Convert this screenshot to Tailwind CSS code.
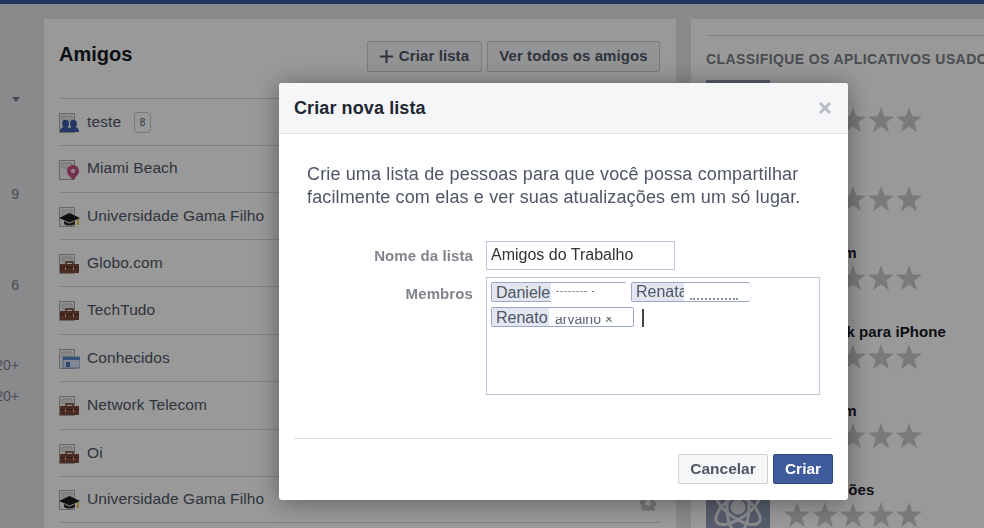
<!DOCTYPE html>
<html lang="pt-BR">
<head>
    <meta charset="UTF-8">
    <meta name="viewport" content="width=device-width, initial-scale=1.0">
    <title>Amigos</title>
    <script src="https://cdn.jsdelivr.net/npm/@tailwindcss/browser@4"></script>
</head>
<body class="bg-[#e5e6ea] font-['Liberation_Sans',Arial,sans-serif] overflow-hidden">
    <svg class="hidden">
        <defs>
            <symbol id="star" viewBox="0 0 24 24"><path fill="currentColor" d="M12 0l3 8.6 9 .3-7.1 5.5 2.5 8.9L12 18.1 4.6 23.300l2.500-8.900L0 8.900l9-.3z"/></symbol>
            <symbol id="doc" viewBox="0 0 21 20"><path d="M.5.5h15v19H.500z" fill="#f4f4f4" stroke="#a9a9a9"/><path d="M3 3h10v5H3z" fill="#e3e3e3" stroke="#c4c4c4"/></symbol>
            <symbol id="bag" viewBox="0 0 21 20"><path d="M7 10V8h7v2" fill="none" stroke="#6d4336" stroke-width="1.500"/><path d="M1 10h19v9H1z" fill="#7c4a3a"/><path d="M1 13h19v1H1z" fill="#4f2c22"/><path d="M6 13h1v3H6zM14 13h1v3h-1z" fill="#e2c7a8"/></symbol>
            <symbol id="cap" viewBox="0 0 21 20"><path d="M10.500 6L21 11l-10.500 4.500L0 11z" fill="#1a1a1a"/><path d="M5 14v3c3 2 8 2 11 0v-3l-5.500 2.500z" fill="#2a2a2a"/><path d="M18 12v6h2v-6z" fill="#e5c84d"/></symbol>
        </defs>
    </svg>

    <div class="h-[4px] bg-[#3b5998]"></div>
    <div class="flex h-[524px]">
        <!-- left rail -->
        <div class="w-[44px] shrink-0 flex flex-col items-end pr-[25px] text-[14px] leading-[16px] text-[#7b7f86]">
            <div class="mt-[93px] mr-[-1px] w-0 h-0 border-x-[4px] border-x-transparent border-t-[5px] border-t-[#7b7f86]"></div>
            <span class="mt-[84px]">9</span>
            <span class="mt-[75px]">6</span>
            <span class="mt-[64px] whitespace-nowrap">20+</span>
            <span class="mt-[15px] whitespace-nowrap">20+</span>
        </div>

        <!-- friends panel -->
        <div class="w-[632px] shrink-0 mt-[15px] mr-[15px] bg-white px-[15px]">
            <div class="flex items-start justify-between h-[79px] pr-[1px]">
                <h1 class="mt-[21px] text-[20px] leading-[28px] font-bold text-[#141823]">Amigos</h1>
                <div class="flex gap-[5px] mt-[22px] text-[15px] font-bold text-[#4e5665] tracking-[0.1px]">
                    <button class="w-[115px] h-[31px] flex items-center justify-center gap-[6px] bg-[#f6f7f8] border border-[#cdced0] rounded-[2px]">
                        <svg width="13" height="13" viewBox="0 0 13 13"><path d="M5.500 0h2v5.500H13v2H7.500V13h-2V7.500H0v-2h5.500z" fill="#4e5665"/></svg>
                        Criar lista
                    </button>
                    <button class="w-[173px] h-[31px] bg-[#f6f7f8] border border-[#cdced0] rounded-[2px]">Ver todos os amigos</button>
                </div>
            </div>
            <ul class="border-t border-[#d8d8d8] text-[15.5px] text-[#4e5665] tracking-[0.1px]">
                <li class="h-[47px] border-b border-[#d8d8d8] flex items-center gap-[7px]">
                    <svg class="w-[21px] h-[20px] mt-[1px]" viewBox="0 0 21 20"><use href="#doc"/><path d="M1 19c0-3 1-4 3.500-5a3.500 4 0 1 1 4 0c1 .4 1.500.8 2 1.500.5-.7 1-1.100 2-1.500a3.500 4 0 1 1 4 0c2.500 1 3.500 2 3.500 5z" fill="#3b5ba8"/></svg>
                    <span class="mt-[-1px]">teste</span>
                    <span class="ml-[6px] mt-[1px] w-[17px] h-[21px] flex items-center justify-center border border-[#c8c8c8] rounded-[4px] text-[10px] tracking-normal">8</span>
                </li>
                <li class="h-[47px] border-b border-[#d8d8d8] flex items-center gap-[7px]">
                    <svg class="w-[21px] h-[20px] mt-[1px]" viewBox="0 0 21 20"><use href="#doc"/><path d="M14 5a6 6 0 0 1 6 6c0 4-4 6-6 9-2-3-6-5-6-9a6 6 0 0 1 6-6z" fill="#c2517f"/><circle cx="14" cy="11" r="2.200" fill="#f6d8e4"/></svg>
                    <span class="mt-[-2px]">Miami Beach</span>
                </li>
                <li class="h-[47px] border-b border-[#d8d8d8] flex items-center gap-[7px]">
                    <svg class="w-[21px] h-[20px] mt-[1px]" viewBox="0 0 21 20"><use href="#doc"/><use href="#cap"/></svg>
                    <span class="mt-[-1px]">Universidade Gama Filho</span>
                </li>
                <li class="h-[47px] border-b border-[#d8d8d8] flex items-center gap-[7px]">
                    <svg class="w-[21px] h-[20px] mt-[1px]" viewBox="0 0 21 20"><use href="#doc"/><use href="#bag"/></svg>
                    <span class="mt-[-1px]">Globo.com</span>
                </li>
                <li class="h-[48px] border-b border-[#d8d8d8] flex items-center gap-[7px]">
                    <svg class="w-[21px] h-[20px] mt-[1px]" viewBox="0 0 21 20"><use href="#doc"/><use href="#bag"/></svg>
                    <span class="mt-[-2px]">TechTudo</span>
                </li>
                <li class="h-[47px] border-b border-[#d8d8d8] flex items-center gap-[7px]">
                    <svg class="w-[21px] h-[20px] mt-[1px]" viewBox="0 0 21 20"><use href="#doc"/><path d="M4 8h17v11H4z" fill="#dbe6f5" stroke="#7f9cc8"/><path d="M4 8h17v3H4z" fill="#5b86c7"/><path d="M7 13h4v5H7z" fill="#4a76b8"/></svg>
                    <span class="mt-[-1px]">Conhecidos</span>
                </li>
                <li class="h-[48px] border-b border-[#d8d8d8] flex items-center gap-[7px]">
                    <svg class="w-[21px] h-[20px] mt-[1px]" viewBox="0 0 21 20"><use href="#doc"/><use href="#bag"/></svg>
                    <span class="mt-[-2px]">Network Telecom</span>
                </li>
                <li class="h-[47px] border-b border-[#d8d8d8] flex items-center gap-[7px]">
                    <svg class="w-[21px] h-[20px] mt-[1px]" viewBox="0 0 21 20"><use href="#doc"/><use href="#bag"/></svg>
                    <span class="mt-[-1px]">Oi</span>
                </li>
                <li class="h-[46px] border-b border-[#d8d8d8] flex items-center gap-[7px]">
                    <svg class="w-[21px] h-[20px] mt-[1px]" viewBox="0 0 21 20"><use href="#doc"/><use href="#cap"/></svg>
                    <span class="mt-[-1px]">Universidade Gama Filho</span>
                    <svg class="ml-auto mr-[5px] mt-[6px]" width="16" height="16" viewBox="0 0 16 16"><path d="M6.500 0h3l.4 2.300 1.500.6 1.900-1.300 2.100 2.100-1.300 1.900.6 1.500 2.300.4v3l-2.300.4-.6 1.500 1.300 1.900-2.100 2.100-1.900-1.300-1.500.6-.4 2.300h-3l-.4-2.300-1.500-.6-1.900 1.300L.6 13l1.300-1.900-.6-1.500L-1 9.200v-3l2.300-.4.6-1.500L.6 2.400l2.100-2.100 1.900 1.300 1.500-.6z M8 5a3 3 0 1 0 0 6 3 3 0 0 0 0-6z" fill="#c8c8c8" fill-rule="evenodd"/></svg>
                </li>
            </ul>
        </div>

        <!-- apps panel -->
        <div class="flex-1 min-w-0 mt-[15px] bg-white pl-[15px] overflow-hidden">
            <div class="border-t border-[#d8d8d8] mt-[16px] pt-[14px] text-[14px] leading-[18px] font-bold text-[#7b7f86] tracking-[0.4px] whitespace-nowrap">CLASSIFIQUE OS APLICATIVOS USADOS</div>
            <div class="mt-[12px] w-[64px] h-[4px] bg-[#86bccb]"></div>
            <div class="flex flex-col gap-[15px] mt-[-4px] text-[15px] font-bold text-[#141823] tracking-[0.1px]">
                <div class="flex gap-[14px] h-[64px]">
                    <div class="w-[64px] h-[64px] bg-[#8e99b2]"></div>
                    <div class="pt-[7px]">
                        <p class="leading-[16px]">Skype</p>
                        <div class="flex gap-[2px] mt-[4px] text-[#cbcbcb]"><svg class="w-[26px] h-[26px]"><use href="#star"/></svg><svg class="w-[26px] h-[26px]"><use href="#star"/></svg><svg class="w-[26px] h-[26px]"><use href="#star"/></svg><svg class="w-[26px] h-[26px]"><use href="#star"/></svg><svg class="w-[26px] h-[26px]"><use href="#star"/></svg></div>
                    </div>
                </div>
                <div class="flex gap-[14px] h-[64px]">
                    <div class="w-[64px] h-[64px] bg-[#8e99b2]"></div>
                    <div class="pt-[7px]">
                        <p class="leading-[16px]">Spotify</p>
                        <div class="flex gap-[2px] mt-[4px] text-[#cbcbcb]"><svg class="w-[26px] h-[26px]"><use href="#star"/></svg><svg class="w-[26px] h-[26px]"><use href="#star"/></svg><svg class="w-[26px] h-[26px]"><use href="#star"/></svg><svg class="w-[26px] h-[26px]"><use href="#star"/></svg><svg class="w-[26px] h-[26px]"><use href="#star"/></svg></div>
                    </div>
                </div>
                <div class="flex gap-[14px] h-[64px]">
                    <div class="w-[64px] h-[64px] bg-[#8e99b2]"></div>
                    <div class="pt-[7px]">
                        <p class="leading-[16px]">Instagram</p>
                        <div class="flex gap-[2px] mt-[4px] text-[#cbcbcb]"><svg class="w-[26px] h-[26px]"><use href="#star"/></svg><svg class="w-[26px] h-[26px]"><use href="#star"/></svg><svg class="w-[26px] h-[26px]"><use href="#star"/></svg><svg class="w-[26px] h-[26px]"><use href="#star"/></svg><svg class="w-[26px] h-[26px]"><use href="#star"/></svg></div>
                    </div>
                </div>
                <div class="flex gap-[14px] h-[64px]">
                    <div class="w-[64px] h-[64px] bg-[#8e99b2]"></div>
                    <div class="pt-[7px]">
                        <p class="leading-[16px] whitespace-nowrap">Facebook para iPhone</p>
                        <div class="flex gap-[2px] mt-[4px] text-[#cbcbcb]"><svg class="w-[26px] h-[26px]"><use href="#star"/></svg><svg class="w-[26px] h-[26px]"><use href="#star"/></svg><svg class="w-[26px] h-[26px]"><use href="#star"/></svg><svg class="w-[26px] h-[26px]"><use href="#star"/></svg><svg class="w-[26px] h-[26px]"><use href="#star"/></svg></div>
                    </div>
                </div>
                <div class="flex gap-[14px] h-[64px]">
                    <div class="w-[64px] h-[64px] bg-[#8e99b2]"></div>
                    <div class="pt-[7px]">
                        <p class="leading-[16px]">Instagram</p>
                        <div class="flex gap-[2px] mt-[4px] text-[#cbcbcb]"><svg class="w-[26px] h-[26px]"><use href="#star"/></svg><svg class="w-[26px] h-[26px]"><use href="#star"/></svg><svg class="w-[26px] h-[26px]"><use href="#star"/></svg><svg class="w-[26px] h-[26px]"><use href="#star"/></svg><svg class="w-[26px] h-[26px]"><use href="#star"/></svg></div>
                    </div>
                </div>
                <div class="flex gap-[14px] h-[64px]">
                    <div class="w-[64px] h-[64px] bg-[#8e99b2] flex items-center justify-center">
                        <svg width="56" height="56" viewBox="0 0 56 56" fill="none" stroke="#e4e6ea" stroke-width="3">
                            <ellipse cx="28" cy="28" rx="26" ry="11" transform="rotate(35 28 28)"/>
                            <ellipse cx="28" cy="28" rx="26" ry="11" transform="rotate(-35 28 28)"/>
                            <ellipse cx="28" cy="28" rx="26" ry="11" transform="rotate(90 28 28)"/>
                            <circle cx="28" cy="28" r="6" fill="#e4e6ea"/>
                        </svg>
                    </div>
                    <div class="pt-[7px]">
                        <p class="leading-[16px]">Notificações</p>
                        <div class="flex gap-[2px] mt-[4px] text-[#cbcbcb]"><svg class="w-[26px] h-[26px]"><use href="#star"/></svg><svg class="w-[26px] h-[26px]"><use href="#star"/></svg><svg class="w-[26px] h-[26px]"><use href="#star"/></svg><svg class="w-[26px] h-[26px]"><use href="#star"/></svg><svg class="w-[26px] h-[26px]"><use href="#star"/></svg></div>
                    </div>
                </div>
            </div>
        </div>
    </div>

    <!-- dim overlay + dialog -->
    <div class="fixed inset-0 bg-black/40">
        <div class="absolute left-[279px] top-[83px] w-[569px] h-[417px] bg-white rounded-[3px] shadow-[0_2px_26px_rgba(0,0,0,0.4)] overflow-hidden flex flex-col">
            <div class="h-[51px] shrink-0 bg-[#f5f6f7] border-b border-[#e5e5e5] flex items-center justify-between pl-[15px] pr-[16px]">
                <h2 class="text-[18px] font-bold text-[#222632] tracking-[0.1px]">Criar nova lista</h2>
                <svg class="mt-[-1px]" width="14" height="14" viewBox="0 0 14 14"><path d="M2 2l10 10M12 2L2 12" stroke="#b8bcc4" stroke-width="3"/></svg>
            </div>
            <p class="mt-[29px] ml-[28px] text-[18px] leading-[23px] text-[#4e5665] tracking-[0.14px] whitespace-nowrap">Crie uma lista de pessoas para que você possa compartilhar<br>facilmente com elas e ver suas atualizações em um só lugar.</p>
            <div class="mt-[32px] flex items-center">
                <label class="w-[194px] text-right text-[15px] font-bold text-[#80848c] tracking-[0.1px] mt-[2px]">Nome da lista</label>
                <div class="ml-[13px] w-[189px] h-[29px] border border-[#bdc7d8] pl-[4px] text-[16px] leading-[25px] text-[#333]">Amigos do Trabalho</div>
            </div>
            <div class="mt-[7px] flex items-start">
                <label class="w-[194px] pt-[6px] text-right text-[15px] font-bold text-[#80848c] tracking-[0.1px]">Membros</label>
                <div class="ml-[13px] w-[334px] h-[118px] border border-[#bdc7d8] pl-[4px] pt-[4px] flex flex-wrap content-start gap-x-[5px] gap-y-[5px] text-[16px] text-[#4e5665]">
                    <div class="w-[135px] h-[20px] flex bg-white border-t border-[#9aa7c7] rounded-[2px] overflow-hidden">
                        <span class="w-[60px] bg-[#e2e6f0] border-l border-b border-[#9aa7c7] pl-[4px] leading-[19px]">Daniele</span>
                        <span class="flex-1 pl-[5px] text-[9px] leading-[17px] text-[#444] tracking-[1px] overflow-hidden">-------- -</span>
                    </div>
                    <div class="w-[119px] h-[20px] flex bg-white border-t border-b border-[#9aa7c7] rounded-[2px] overflow-hidden">
                        <span class="w-[53px] bg-[#e2e6f0] border-l border-[#9aa7c7] pl-[4px] leading-[18px] overflow-hidden whitespace-nowrap">Renata</span>
                        <span class="flex-1 self-end ml-[6px] mr-[12px] mb-[1px] border-b-2 border-dotted border-[#8a91a0]"></span>
                    </div>
                    <div class="w-[143px] h-[20px] flex bg-white border-t border-[#9aa7c7] rounded-[2px] overflow-hidden">
                        <span class="w-[58px] bg-[#e2e6f0] border-l border-b border-[#9aa7c7] pl-[4px] leading-[19px]">Renato</span>
                        <span class="flex-1 flex items-end border-b border-r border-[#9aa7c7]">
                            <span class="block h-[9px] overflow-hidden pl-[6px]">
                                <span class="block mt-[-6px] text-[14px] leading-[16px] text-[#5b6478] whitespace-nowrap">arvalho ×</span>
                            </span>
                        </span>
                    </div>
                    <div class="ml-[3px] mt-[2px] w-[2px] h-[18px] bg-[#444]"></div>
                </div>
            </div>
            <div class="mt-auto mx-[15px] h-[62px] border-t border-[#dcdee0] flex items-start justify-end gap-[5px] pt-[15px] text-[15.5px] font-bold">
                <button class="w-[90px] h-[30px] bg-[#f6f7f8] border border-[#cdced0] rounded-[2px] text-[#4e5665]">Cancelar</button>
                <button class="w-[60px] h-[30px] bg-[#3f5b9c] border border-[#2f477a] rounded-[2px] text-white">Criar</button>
            </div>
        </div>
    </div>
</body>
</html>
